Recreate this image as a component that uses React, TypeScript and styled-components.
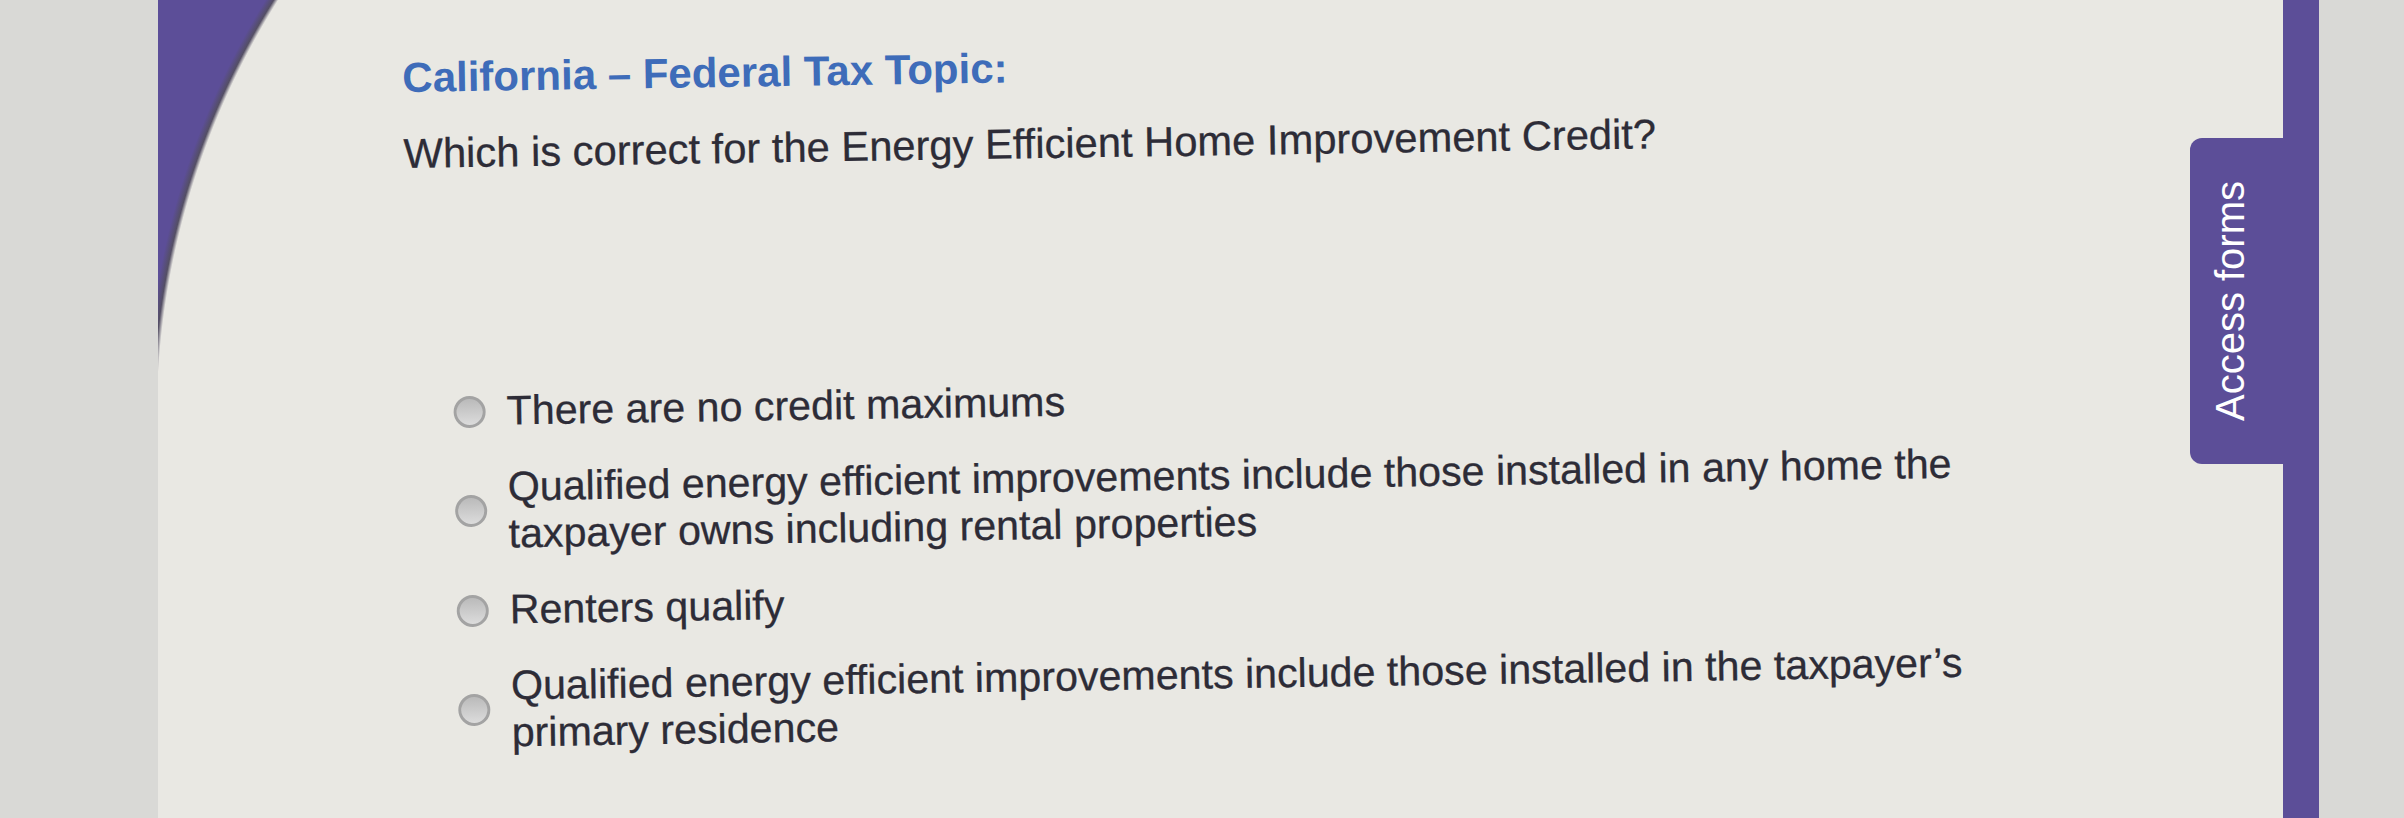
import React from 'react';
import styled, { createGlobalStyle } from 'styled-components';

const palette = {
  rail: '#d9d9d6',
  paper: '#e9e8e3',
  purple: '#5c4e98',
  blue: '#3e6cb9',
  ink: '#2d2c37',
};

const GlobalStyle = createGlobalStyle`
  html, body {
    margin: 0;
    padding: 0;
  }
  body {
    background: ${palette.rail};
    font-family: 'Liberation Sans', Arial, sans-serif;
  }
`;

const choices = [
  'There are no credit maximums',
  'Qualified energy efficient improvements include those installed in any home the taxpayer owns including rental properties',
  'Renters qualify',
  'Qualified energy efficient improvements include those installed in the taxpayer\u2019s primary residence',
];

const Screen = styled.div`
  display: flex;
  height: 818px;
  overflow: hidden;
`;

const Rail = styled.div<{ $width: number }>`
  flex: 0 0 ${({ $width }) => $width}px;
  background: ${palette.rail};
`;

const Strip = styled.div`
  flex: 0 0 36px;
  background: ${palette.purple};
`;

// the purple swoosh in the top-left corner is the page's own background
const Panel = styled.main`
  flex: 1;
  display: flex;
  min-width: 0;
  background:
    radial-gradient(
        circle 790px at 786px 420px,
        transparent 787px,
        rgba(58, 52, 78, 0.85) 791px,
        ${palette.purple} 798px
      )
      0 0 / 320px 420px no-repeat,
    ${palette.paper};
`;

// the photo was taken at a slight angle
const Content = styled.section`
  flex: 1;
  padding: 54px 0 0 244px;
  transform: rotate(-0.9deg);
  transform-origin: 244px 54px;
`;

const Title = styled.h1`
  margin: 0;
  font-size: 42px;
  line-height: 47px;
  font-weight: 700;
  color: ${palette.blue};
`;

const Question = styled.p`
  margin: 29px 0 0;
  font-size: 41.7px;
  line-height: 47px;
  color: ${palette.ink};
  -webkit-text-stroke: 0.3px ${palette.ink};
`;

const Choices = styled.ul`
  list-style: none;
  margin: 212px 0 0 46px;
  padding: 0;
  display: flex;
  flex-direction: column;
  gap: 29px;
`;

const Choice = styled.li`
  display: flex;
  align-items: center;
  gap: 21px;
`;

const Radio = styled.span`
  flex: 0 0 auto;
  width: 26px;
  height: 26px;
  border-radius: 50%;
  border: 3px solid #a3a3a3;
  background: linear-gradient(#bababa, #dcdcdc);
`;

const ChoiceText = styled.span`
  max-width: 1530px;
  font-size: 41.2px;
  line-height: 47px;
  color: ${palette.ink};
  -webkit-text-stroke: 0.3px ${palette.ink};
`;

const TabColumn = styled.aside`
  flex: 0 0 93px;
  display: flex;
  flex-direction: column;
  padding-top: 138px;
`;

const Tab = styled.button`
  height: 326px;
  display: flex;
  align-items: center;
  padding: 0 0 0 20px;
  border: none;
  border-radius: 12px 0 0 12px;
  background: ${palette.purple};
  color: #fff;
  font-family: 'Liberation Sans', Arial, sans-serif;
  cursor: pointer;
`;

const TabLabel = styled.span`
  writing-mode: vertical-rl;
  transform: rotate(180deg);
  font-size: 40px;
  line-height: 40px;
  white-space: nowrap;
`;

export default function App() {
  return (
    <>
      <GlobalStyle />
      <Screen>
        <Rail $width={158} />
        <Panel>
          <Content>
            <Title>California – Federal Tax Topic:</Title>
            <Question>Which is correct for the Energy Efficient Home Improvement Credit?</Question>
            <Choices>
              {choices.map((c) => (
                <Choice key={c}>
                  <Radio />
                  <ChoiceText>{c}</ChoiceText>
                </Choice>
              ))}
            </Choices>
          </Content>
          <TabColumn>
            <Tab>
              <TabLabel>Access forms</TabLabel>
            </Tab>
          </TabColumn>
        </Panel>
        <Strip />
        <Rail $width={85} />
      </Screen>
    </>
  );
}
